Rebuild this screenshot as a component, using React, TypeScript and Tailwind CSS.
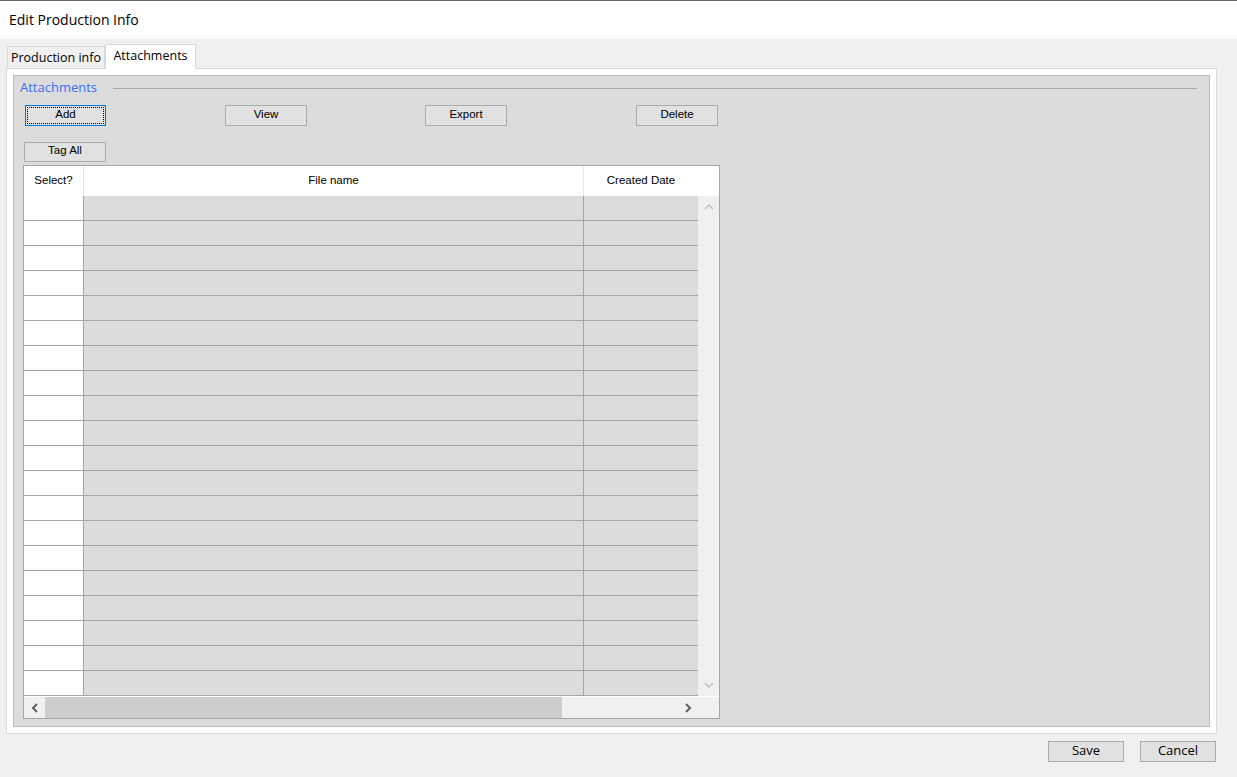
const rows = Array.from({ length: 20 }, (_, i) => i);

const Btn = ({ label, className = "" }: { label: string; className?: string }) => (
  <button
    type="button"
    className={`border border-[#adadad] bg-[#e1e1e1] leading-none text-black pb-[2px] ${className}`}
  >
    {label}
  </button>
);

const Chevron = ({ dir, color }: { dir: "up" | "down" | "left" | "right"; color: string }) => {
  const d =
    dir === "up"
      ? "M1 6 L5 2 L9 6"
      : dir === "down"
      ? "M1 2 L5 6 L9 2"
      : dir === "left"
      ? "M6 1 L2 5 L6 9"
      : "M2 1 L6 5 L2 9";
  const w = dir === "up" || dir === "down" ? 10 : 8;
  const h = dir === "up" || dir === "down" ? 8 : 10;
  return (
    <svg width={w} height={h} viewBox={`0 0 ${w} ${h}`}>
      <path d={d} fill="none" stroke={color} strokeWidth={dir === "left" || dir === "right" ? 2 : 1.4} />
    </svg>
  );
};

const App = () => {
  return (
    <div className="w-[1237px] h-[777px] bg-[#f0f0f0] flex flex-col overflow-hidden font-['Liberation_Sans',Arial,sans-serif] text-black">
      <div className="h-px bg-[#6b6b6b]" />
      {/* title bar */}
      <div className="h-[38px] bg-white flex items-center pl-[9px] pb-[2px] text-[14px] font-['Open_Sans',sans-serif]">
        Edit Production Info
      </div>

      {/* tabs */}
      <div className="flex items-end h-[24px] mt-[5px] pl-[7px] font-['Open_Sans',sans-serif] text-[12.5px]">
        <div className="h-[22px] w-[98px] border border-b-0 border-[#d9d9d9] bg-[#f0f0f0] flex items-center justify-center pt-[2px]">
          Production info
        </div>
        <div className="relative z-10 -mb-px h-[25px] w-[91px] border border-b-0 border-[#d9d9d9] bg-white flex items-center justify-center pb-[1px]">
          Attachments
        </div>
      </div>

      {/* tab page */}
      <div className="ml-[6px] w-[1211px] h-[666px] border border-[#d9d9d9] bg-white p-[6px]">
        <div className="h-full border border-[#bcbcbc] bg-[#dcdcdc] flex flex-col">
          <div className="flex items-center h-[18px] mt-[3px] pl-[6px] pr-[12px]">
            <span className="text-[13px] text-[#3a6ef5] font-['Open_Sans',sans-serif]">Attachments</span>
            <div className="flex-1 ml-[16px] h-px bg-[#a8a8a8]" />
          </div>

          <div className="flex mt-[8px] pl-[11px] text-[11.5px]">
            <Btn
              label="Add"
              className="h-[21px] w-[81px] !border-[#0078d7] outline-1 outline-dotted outline-black outline-offset-[-3px]"
            />
            <Btn label="View" className="h-[21px] w-[82px] ml-[119px]" />
            <Btn label="Export" className="h-[21px] w-[82px] ml-[118px]" />
            <Btn label="Delete" className="h-[21px] w-[82px] ml-[129px]" />
          </div>

          <div className="flex mt-[16px] pl-[10px] text-[11.5px]">
            <Btn label="Tag All" className="h-[20px] w-[82px]" />
          </div>

          {/* grid */}
          <div className="mt-[3px] ml-[9px] w-[697px] border border-[#a5a5a5] flex flex-col text-[11.5px]">
            <div className="flex h-[30px] bg-white">
              <div className="w-[60px] border-r border-[#e6e6e6] flex items-center justify-center">Select?</div>
              <div className="w-[500px] border-r border-[#e6e6e6] flex items-center justify-center">File name</div>
              <div className="w-[114px] flex items-center justify-center">Created Date</div>
              <div className="w-[21px]" />
            </div>
            <div className="flex">
              <div className="flex flex-col">
                {rows.map((r) => (
                  <div key={r} className="flex h-[25px] border-b border-[#a5a5a5]">
                    <div className="w-[60px] bg-white border-r border-[#a5a5a5]" />
                    <div className="w-[500px] bg-[#dcdcdc] border-r border-[#a5a5a5]" />
                    <div className="w-[114px] bg-[#dcdcdc]" />
                  </div>
                ))}
              </div>
              <div className="w-[21px] bg-[#f0f0f0] flex flex-col items-center justify-between py-[7px]">
                <Chevron dir="up" color="#bcbcbc" />
                <Chevron dir="down" color="#bcbcbc" />
              </div>
            </div>
            <div className="flex h-[22px] bg-[#f0f0f0] border-t border-white">
              <div className="w-[21px] flex items-center justify-center">
                <Chevron dir="left" color="#606060" />
              </div>
              <div className="w-[517px] bg-[#cdcdcd]" />
              <div className="flex-1" />
              <div className="w-[21px] flex items-center justify-center">
                <Chevron dir="right" color="#606060" />
              </div>
              <div className="w-[21px]" />
            </div>
          </div>
        </div>
      </div>

      {/* footer */}
      <div className="flex justify-end gap-[16px] pr-[21px] mt-[7px] text-[13px] font-['Open_Sans',sans-serif]">
        <Btn label="Save" className="h-[21px] w-[76px]" />
        <Btn label="Cancel" className="h-[21px] w-[76px]" />
      </div>
    </div>
  );
};

export default App;
